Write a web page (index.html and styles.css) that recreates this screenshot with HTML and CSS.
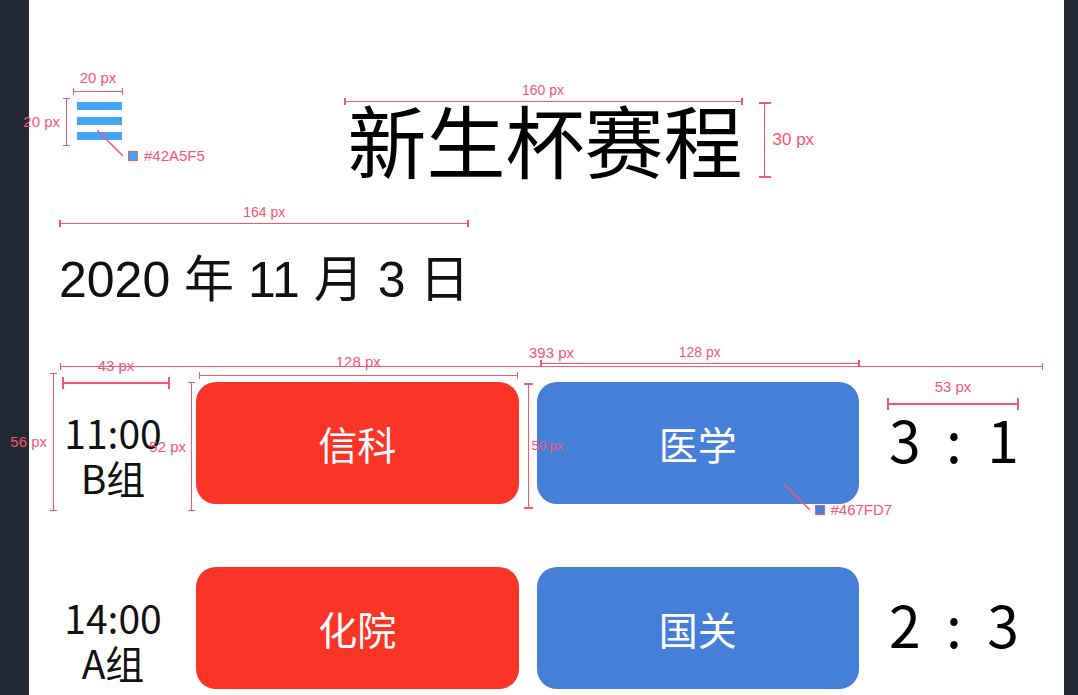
FILE: index.html
```html
<!DOCTYPE html>
<html lang="zh-CN">
<head>
<meta charset="utf-8">
<meta name="viewport" content="width=device-width, initial-scale=1">
<title>新生杯赛程</title>
<link rel="stylesheet" href="styles.css">
</head>
<body>
<main class="screen">
  <header class="header">
    <div class="menu">
      <button class="menu-button" type="button" aria-label="菜单">
        <svg viewBox="0 0 50 48" width="50" height="48"><path d="M4 4h45v8H4zM4 19h45v8H4zM4 34h45v8H4z" fill="#42a5f5"/></svg>
      </button>
      <div class="dim dim-h menu-width"><span class="label">20 px</span></div>
      <div class="dim dim-v menu-height"><span class="label">20 px</span></div>
      <div class="callout menu-color">
        <svg class="pointer" viewBox="0 0 26 26" width="26" height="26"><path d="M0 0L26 26"/></svg>
        <span class="swatch swatch-light"></span><span>#42A5F5</span>
      </div>
    </div>
    <div class="title">
      <h1 class="title-text">新生杯赛程</h1>
      <div class="dim dim-h thick title-width"><span class="label">160 px</span></div>
      <div class="dim dim-v thick title-height"><span class="label">30 px</span></div>
    </div>
  </header>

  <div class="date">
    <h2 class="date-text">2020 年 11 月 3 日</h2>
    <div class="dim dim-h thick date-width"><span class="label">164 px</span></div>
  </div>

  <section class="matches">
    <article class="match">
      <div class="time">
        <div>11:00</div>
        <div>B组</div>
        <div class="dim dim-h thick time-width"><span class="label">43 px</span></div>
      </div>
      <div class="teams">
        <div class="team home">信科
          <div class="dim dim-h home-width"><span class="label">128 px</span></div>
          <div class="dim dim-v home-height"><span class="label">52 px</span></div>
        </div>
        <div class="team away">医学
          <div class="dim dim-h thick away-width"><span class="label">128 px</span></div>
          <div class="dim dim-v thick away-height"><span class="label">50 px</span></div>
          <div class="callout away-color">
            <svg class="pointer" viewBox="0 0 26 26" width="26" height="26"><path d="M0 0L26 26"/></svg>
            <span class="swatch swatch-blue"></span><span>#467FD7</span>
          </div>
        </div>
      </div>
      <div class="score">
        <span>3</span><span>:</span><span>1</span>
        <div class="dim dim-h thick score-width"><span class="label">53 px</span></div>
      </div>
      <div class="dim dim-h row-width"><span class="label">393 px</span></div>
      <div class="dim dim-v row-height"><span class="label">56 px</span></div>
    </article>

    <article class="match">
      <div class="time">
        <div>14:00</div>
        <div>A组</div>
      </div>
      <div class="teams">
        <div class="team home">化院</div>
        <div class="team away">国关</div>
      </div>
      <div class="score"><span>2</span><span>:</span><span>3</span></div>
    </article>
  </section>
</main>
</body>
</html>
```

FILE: styles.css
```css
* {
  box-sizing: border-box;
}

body {
  margin: 0;
  background: #222935;
  font-family: "Noto Sans CJK SC", sans-serif;
  color: #111;
}

.screen {
  min-height: 100vh;
  margin: 0 14px 0 29px;
  padding: 98px 0 6px;
  background: #fff;
}

.header {
  display: grid;
  grid-template-columns: 1fr auto 1fr;
  align-items: start;
  padding: 0 47px 0 44px;
}

.menu,
.title,
.date,
.match,
.time,
.team,
.score {
  position: relative;
}

.menu {
  justify-self: start;
}

.menu-button {
  display: block;
  padding: 0;
  border: 0;
  background: none;
}

.menu-button svg {
  display: block;
}

.title-text {
  margin: 0;
  font-size: 79px;
  line-height: 82px;
  font-weight: 400;
  color: #000;
}

.date {
  width: fit-content;
  margin: 70px 0 0 30px;
}

.date-text {
  margin: 0;
  font-family: "Liberation Sans", "Noto Sans CJK SC", sans-serif;
  font-size: 50px;
  line-height: 60px;
  font-weight: 400;
}

.matches {
  display: flex;
  flex-direction: column;
  gap: 63px;
  margin-top: 72px;
  padding: 0 45px 0 31px;
}

.match {
  display: flex;
  align-items: center;
  gap: 30px;
}

.time {
  width: 106px;
  padding-top: 24px;
  font-size: 39px;
  line-height: 45px;
  text-align: center;
}

.teams {
  display: flex;
  flex: 1;
  gap: 18px;
}

.team {
  display: flex;
  flex: 1;
  align-items: center;
  justify-content: center;
  height: 122px;
  border-radius: 20px;
  font-size: 39px;
  color: #fff;
}

.home {
  background: #fa3426;
}

.away {
  background: #467fd7;
}

.score {
  display: flex;
  justify-content: space-between;
  width: 130px;
  padding-bottom: 10px;
  font-size: 57px;
  line-height: 60px;
  color: #000;
}

/* Dimension marks */
.dim {
  position: absolute;
  border: 0 solid #fa5571;
}

.dim::before {
  content: "";
  position: absolute;
  background: #fa5571;
}

.dim-h {
  left: 0;
  right: 0;
  height: 7px;
  border-width: 0 1px;
}

.dim-h::before {
  left: 0;
  right: 0;
  top: 3px;
  height: 1px;
}

.dim-v {
  top: 0;
  bottom: 0;
  width: 7px;
  border-width: 1px 0;
}

.dim-v::before {
  top: 0;
  bottom: 0;
  left: 3px;
  width: 1px;
}

.dim-h.thick {
  border-width: 0 2px;
}

.dim-v.thick {
  border-width: 2px 0;
}

.label,
.callout {
  font-family: "Liberation Sans", sans-serif;
  font-size: 15px;
  line-height: 16px;
  color: #fa5571;
  white-space: nowrap;
}

.label {
  position: absolute;
}

.dim-h .label {
  left: 50%;
  bottom: 9px;
  transform: translateX(-50%);
}

.dim-v .label {
  top: 50%;
  right: 10px;
  transform: translateY(-50%);
}

.menu-width {
  top: -10px;
}

.menu-height {
  left: -10px;
}

.title-width {
  top: 0;
  left: -4px;
  right: 0;
}

.title-width .label,
.date-width .label,
.away-width .label {
  bottom: 7px;
  font-size: 14px;
}

.title-height {
  top: 4px;
  bottom: 2px;
  right: -28px;
  width: 12px;
}

.title-height::before,
.away-height::before {
  left: 5px;
}

.title-height .label {
  left: 14px;
  right: auto;
  font-size: 17px;
}

.date-width {
  top: -30px;
}

.time-width {
  top: -9px;
  left: 2px;
  right: -4px;
  height: 12px;
}

.time-width::before,
.score-width::before {
  top: 5px;
  height: 2px;
}

.time-width .label,
.score-width .label {
  bottom: 15px;
}

.home-width {
  top: -10px;
  left: 3px;
  right: 1px;
}

.home-height {
  left: -8px;
  bottom: -7px;
}

.home-height .label {
  right: 9px;
}

.away-width {
  top: -22px;
  left: 3px;
  right: -1px;
}

.away-height {
  top: 1px;
  bottom: -5px;
  left: -13px;
  width: 9px;
}

.away-height::before {
  left: 4px;
}

.away-height .label {
  left: 8px;
  right: auto;
  font-size: 13px;
}

.score-width {
  top: -10px;
  left: -2px;
  right: 0;
  height: 12px;
}

.row-width {
  top: -19px;
  right: -24px;
}

.row-height {
  top: -9px;
  bottom: -7px;
  left: -10px;
}

.callout {
  position: absolute;
  display: flex;
  align-items: flex-end;
}

.pointer {
  margin-bottom: 8px;
  fill: none;
  stroke: #fa5571;
  stroke-width: 1.5;
}

.swatch {
  width: 10px;
  height: 10px;
  margin: 0 6px 3px 5px;
  border: 1px solid #fa5571;
}

.swatch-light {
  background: #42a5f5;
}

.swatch-blue {
  background: #467fd7;
}

.menu-color {
  top: 32px;
  left: 24px;
}

.away-color {
  top: 102px;
  left: 247px;
}
```
